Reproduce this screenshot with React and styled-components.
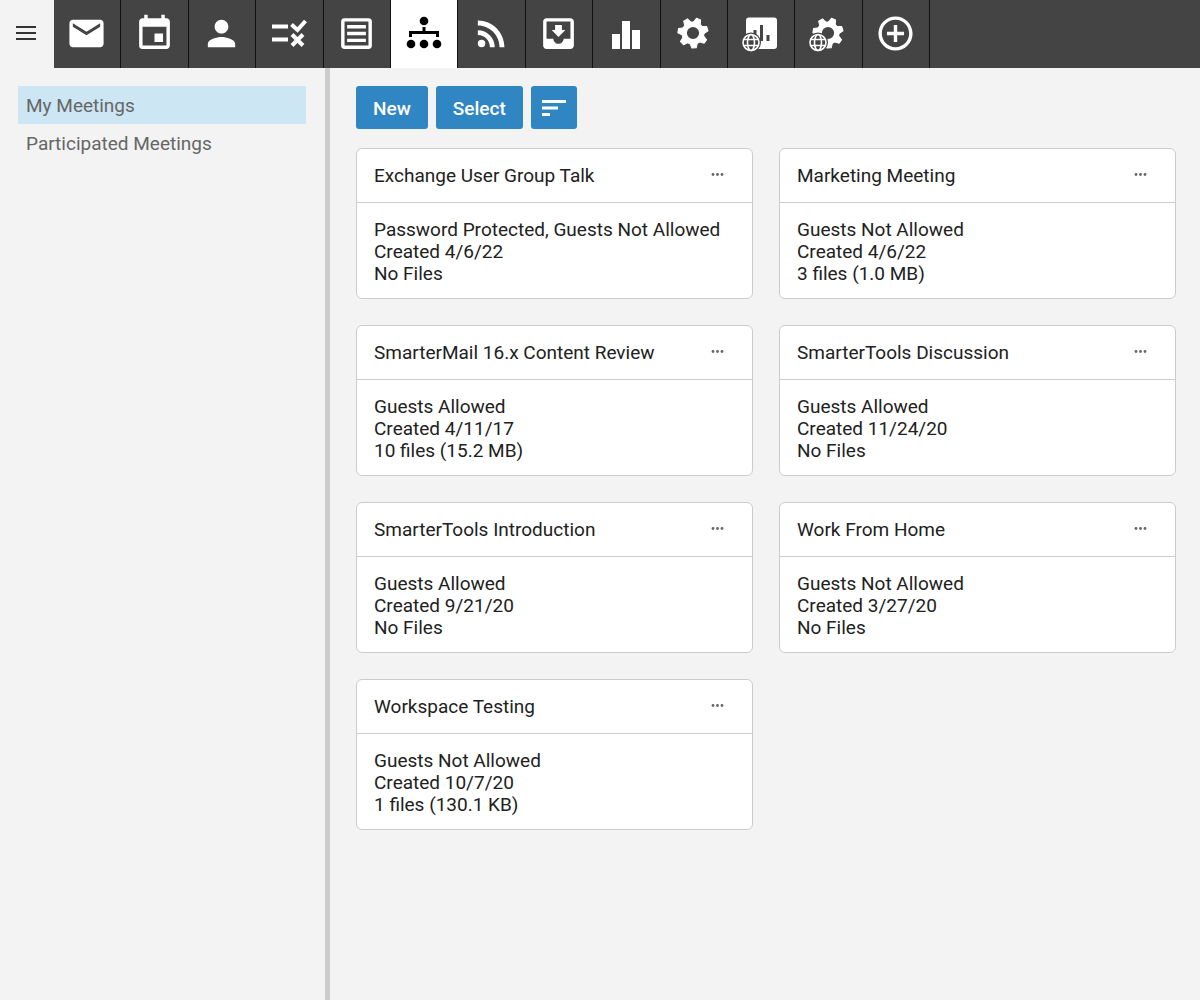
import React from 'react';
import styled, { createGlobalStyle } from 'styled-components';
import {
  MdAddCircleOutline,
  MdEmail,
  MdEvent,
  MdMoveToInbox,
  MdPerson,
  MdRssFeed,
} from 'react-icons/md';

const GlobalStyle = createGlobalStyle`
  * {
    box-sizing: border-box;
  }

  body {
    margin: 0;
    background: #f3f3f3;
    color: #212121;
    font-family: Roboto, 'Liberation Sans', sans-serif;
    font-size: 19px;
    line-height: 22px;
  }

  button {
    font: inherit;
    cursor: pointer;
  }
`;

const Page = styled.div`
  display: flex;
  flex-direction: column;
  min-height: 100vh;
`;

const TopBar = styled.header`
  display: flex;
  height: 68px;
  background: #444;
`;

const MenuButton = styled.button`
  display: flex;
  align-items: center;
  justify-content: center;
  width: 54px;
  padding: 0 2px 2px 0;
  border: 0;
  background: #f3f3f3;
  color: #333;
`;

const Nav = styled.nav`
  display: flex;
  flex: 0 1 876px;
`;

const NavButton = styled.button`
  display: flex;
  flex: 1;
  align-items: center;
  justify-content: center;
  min-width: 0;
  padding: 0 1px 2px 0;
  border: 0;
  border-right: 1px solid #111;
  background: ${({ $active }) => ($active ? '#fff' : '#444')};
  color: ${({ $active }) => ($active ? '#000' : '#fff')};
`;

const Body = styled.div`
  display: flex;
  flex: 1;
`;

const Sidebar = styled.aside`
  flex: 0 0 330px;
  padding: 18px 19px 0 18px;
  border-right: 5px solid #ccc;
`;

const FolderLink = styled.a`
  display: block;
  padding: 9px 8px 7px;
  background: ${({ $active }) => ($active ? '#cce6f4' : 'transparent')};
  color: #666;
  text-decoration: none;
`;

const Main = styled.main`
  flex: 1;
  min-width: 0;
  padding: 18px 24px 24px 26px;
`;

const Toolbar = styled.div`
  display: flex;
  gap: 8px;
  margin-bottom: 19px;
`;

const ToolButton = styled.button`
  display: flex;
  align-items: center;
  height: 43px;
  padding: ${({ $icon }) => ($icon ? '0 11px' : '2px 17px 0')};
  border: 0;
  border-radius: 3px;
  background: #2f86c3;
  color: #fff;
  font-weight: 500;
`;

const Cards = styled.div`
  display: grid;
  grid-template-columns: 1fr 1fr;
  gap: 26px;
`;

const Card = styled.article`
  border: 1px solid #ccc;
  border-radius: 6px;
  background: #fff;
`;

const CardHeader = styled.header`
  display: flex;
  align-items: center;
  justify-content: space-between;
  height: 54px;
  padding: 0 24px 0 17px;
  border-bottom: 1px solid #ccc;
`;

const CardTitle = styled.h2`
  margin: 0;
  font-size: 19px;
  font-weight: 400;
`;

const MoreButton = styled.button`
  display: flex;
  padding: 4px 4px 6px;
  border: 0;
  background: none;
  color: #666;
`;

const CardBody = styled.div`
  padding: 16px 17px 13px;
`;

const Line = styled.div`
  line-height: 22px;
`;

const MenuIcon = () => (
  <svg width="20" height="14" viewBox="0 0 20 14" fill="currentColor">
    <path d="M0 0h20v2H0zM0 6h20v2H0zM0 12h20v2H0z" />
  </svg>
);

const TasksIcon = () => (
  <svg width="36" height="30" viewBox="0 0 36 30" fill="none" stroke="currentColor" strokeWidth="4">
    <path d="M1 8.500h16M1 21.500h16" />
    <path d="M20.500 6.500l6 5.500L34.500 3M21 16.500l11 11M32 16.500l-11 11" />
  </svg>
);

const NotesIcon = () => (
  <svg width="41" height="41" viewBox="0 0 24 24" fill="none" stroke="currentColor" strokeWidth="2">
    <rect x="4" y="4" width="16" height="16" rx="1" />
    <path d="M6.5 8h11M6.5 12h11M6.5 16h11" />
  </svg>
);

const MeetingsIcon = () => (
  <svg width="36" height="34" viewBox="0 0 36 34" fill="currentColor">
    <circle cx="18" cy="5" r="4.3" />
    <circle cx="5" cy="28" r="4.3" />
    <circle cx="18" cy="28" r="4.3" />
    <circle cx="31" cy="28" r="4.3" />
    <path d="M16.500 11h3v4h13.500v6h-3v-3h-24v3h-3v-6h13.500z" />
  </svg>
);

const ReportsIcon = () => (
  <svg width="28" height="32" viewBox="0 0 28 32" fill="currentColor">
    <path d="M0 17h8v15H0zM10 4h8v28h-8zM20 13h8v19h-8z" />
  </svg>
);

const teeth = [0, 1, 2, 3, 4, 5, 6];

const Gear = () => (
  <>
    <circle cx="19" cy="19" r="8.8" fill="none" stroke="currentColor" strokeWidth="5.4" />
    {teeth.map(n => (
      <path
        key={n}
        d="M15 28L16.800 34h4.400L23 28z"
        stroke="currentColor"
        strokeLinejoin="round"
        transform={`rotate(${(n * 360) / 7 - 4} 19 19)`}
      />
    ))}
  </>
);

// small globe that sits on the lower left corner of the domain icons
const Globe = () => (
  <>
    <circle cx="9" cy="28.5" r="10" fill="#444" />
    <g fill="none" stroke="currentColor" strokeWidth="1.6">
      <circle cx="9" cy="28.5" r="8" />
      <ellipse cx="9" cy="28.5" rx="3.5" ry="8" />
      <path d="M1.700 25.500h14.600M1.700 31.500h14.600" />
    </g>
  </>
);

const SettingsIcon = () => (
  <svg width="38" height="38" viewBox="0 0 38 38" fill="currentColor">
    <Gear />
  </svg>
);

const DomainReportsIcon = () => (
  <svg width="38" height="38" viewBox="0 0 38 38" fill="currentColor">
    <rect x="4" y="3.5" width="31" height="31.5" rx="3" />
    <path fill="#444" d="M11.500 16h3v12h-3zM18 11h3v16h-3zM24.500 21h3v6h-3z" />
    <Globe />
  </svg>
);

const DomainSettingsIcon = () => (
  <svg width="38" height="38" viewBox="0 0 38 38" fill="currentColor">
    <Gear />
    <Globe />
  </svg>
);

const SortIcon = () => (
  <svg width="24" height="16" viewBox="0 0 24 16" fill="currentColor">
    <path d="M0 0h24v3H0zM0 6.500h16v3H0zM0 13h8v3H0z" />
  </svg>
);

const DotsIcon = () => (
  <svg width="13" height="3" viewBox="0 0 13 3" fill="currentColor">
    <circle cx="2" cy="1.5" r="1.4" />
    <circle cx="6.5" cy="1.5" r="1.4" />
    <circle cx="11" cy="1.5" r="1.4" />
  </svg>
);

const navItems = [
  { label: 'Email', icon: <MdEmail size={41} /> },
  { label: 'Calendar', icon: <MdEvent size={41} /> },
  { label: 'Contacts', icon: <MdPerson size={41} /> },
  { label: 'Tasks', icon: <TasksIcon /> },
  { label: 'Notes', icon: <NotesIcon /> },
  { label: 'Meetings', icon: <MeetingsIcon />, active: true },
  { label: 'RSS Feeds', icon: <MdRssFeed size={41} /> },
  { label: 'File Storage', icon: <MdMoveToInbox size={41} /> },
  { label: 'Reports', icon: <ReportsIcon /> },
  { label: 'Settings', icon: <SettingsIcon /> },
  { label: 'Domain Reports', icon: <DomainReportsIcon /> },
  { label: 'Domain Settings', icon: <DomainSettingsIcon /> },
  { label: 'Add', icon: <MdAddCircleOutline size={41} /> },
];

const meetings = [
  { title: 'Exchange User Group Talk', access: 'Password Protected, Guests Not Allowed', created: '4/6/22', files: 'No Files' },
  { title: 'Marketing Meeting', access: 'Guests Not Allowed', created: '4/6/22', files: '3 files (1.0 MB)' },
  { title: 'SmarterMail 16.x Content Review', access: 'Guests Allowed', created: '4/11/17', files: '10 files (15.2 MB)' },
  { title: 'SmarterTools Discussion', access: 'Guests Allowed', created: '11/24/20', files: 'No Files' },
  { title: 'SmarterTools Introduction', access: 'Guests Allowed', created: '9/21/20', files: 'No Files' },
  { title: 'Work From Home', access: 'Guests Not Allowed', created: '3/27/20', files: 'No Files' },
  { title: 'Workspace Testing', access: 'Guests Not Allowed', created: '10/7/20', files: '1 files (130.1 KB)' },
];

const MeetingCard = ({ meeting }) => (
  <Card>
    <CardHeader>
      <CardTitle>{meeting.title}</CardTitle>
      <MoreButton type="button" aria-label={`Actions for ${meeting.title}`}>
        <DotsIcon />
      </MoreButton>
    </CardHeader>
    <CardBody>
      <Line>{meeting.access}</Line>
      <Line>Created {meeting.created}</Line>
      <Line>{meeting.files}</Line>
    </CardBody>
  </Card>
);

const App = () => (
  <Page>
    <GlobalStyle />
    <TopBar>
      <MenuButton type="button" aria-label="Menu"><MenuIcon /></MenuButton>
      <Nav>
        {navItems.map(item => (
          <NavButton key={item.label} type="button" aria-label={item.label} $active={item.active}>
            {item.icon}
          </NavButton>
        ))}
      </Nav>
    </TopBar>
    <Body>
      <Sidebar>
        <FolderLink href="#my" $active>My Meetings</FolderLink>
        <FolderLink href="#participated">Participated Meetings</FolderLink>
      </Sidebar>
      <Main>
        <Toolbar>
          <ToolButton type="button">New</ToolButton>
          <ToolButton type="button">Select</ToolButton>
          <ToolButton type="button" aria-label="Sort" $icon><SortIcon /></ToolButton>
        </Toolbar>
        <Cards>
          {meetings.map(meeting => <MeetingCard key={meeting.title} meeting={meeting} />)}
        </Cards>
      </Main>
    </Body>
  </Page>
);

export default App;
